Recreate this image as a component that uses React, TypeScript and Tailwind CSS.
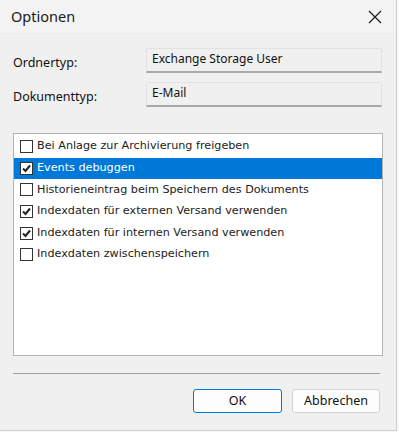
import React from "react";

const items = [
  { label: "Bei Anlage zur Archivierung freigeben", checked: false },
  { label: "Events debuggen", checked: true, selected: true },
  { label: "Historieneintrag beim Speichern des Dokuments", checked: false },
  { label: "Indexdaten für externen Versand verwenden", checked: true },
  { label: "Indexdaten für internen Versand verwenden", checked: true },
  { label: "Indexdaten zwischenspeichern", checked: false },
];

function Box({ checked }: { checked: boolean }) {
  return (
    <div className="w-[13px] h-[13px] border border-[#333333] bg-white flex items-center justify-center shrink-0">
      {checked && (
        <svg width="11" height="11" viewBox="0 0 11 11">
          <path d="M2 5.5 L4.5 8 L9 2.5" stroke="#222" strokeWidth="2" fill="none" />
        </svg>
      )}
    </div>
  );
}

export default function App() {
  const segoe = { fontFamily: '"Noto Sans", "Open Sans", sans-serif' };
  return (
    <div className="w-[399px] h-[432px] bg-[#f7f7f7] overflow-hidden">
      <div className="w-[397px] h-[431px] border-r border-b border-[#cfcfcf] bg-[#f0f0f0] flex flex-col" style={segoe}>
        <div className="h-[34px] bg-[#f3f3f3] flex items-center justify-between pl-[11px] pr-[14px] border-b border-[#ececec]">
          <span className="text-[14.5px] text-[#1a1a1a]">Optionen</span>
          <svg width="14" height="14" viewBox="0 0 14 14">
            <path d="M1 1 L13 13 M13 1 L1 13" stroke="#1a1a1a" strokeWidth="1.2" />
          </svg>
        </div>
        <div className="flex flex-col pl-[13px] pr-[14px]">
          <div className="flex items-start mt-[14px]">
            <div className="w-[133px] pt-[6px] text-[12.5px] text-[#111]">Ordnertyp:</div>
            <div className="w-[236px] h-[25px] border border-[#e2e2e2] border-b-2 border-b-[#a8a8a8] bg-[#f0f0f0] px-[5px] pt-[1px] text-[12px] text-[#111]">
              Exchange Storage User
            </div>
          </div>
          <div className="flex items-start mt-[9px]">
            <div className="w-[133px] pt-[6px] text-[12.5px] text-[#111]">Dokumenttyp:</div>
            <div className="w-[236px] h-[25px] border border-[#e2e2e2] border-b-2 border-b-[#a8a8a8] bg-[#f0f0f0] px-[5px] pt-[1px] text-[12px] text-[#111]">
              E-Mail
            </div>
          </div>
          <div
            className="mt-[26px] w-[370px] h-[223px] border border-[#b4b4b4] bg-white pt-[2px]"
            style={{ fontFamily: '"DejaVu Sans", sans-serif' }}
          >
            {items.map((it) => (
              <div
                key={it.label}
                className={`h-[21.6px] flex items-center gap-[4px] pl-[6px] text-[11.2px] ${
                  it.selected ? "bg-[#0078d7] text-white" : "text-[#222]"
                }`}
              >
                <Box checked={it.checked} />
                <span>{it.label}</span>
              </div>
            ))}
          </div>
          <div className="mt-[17px] w-[367px] h-px bg-[#a0a0a0]" />
          <div className="flex justify-end gap-[10px] mt-[15px] pr-[2px]">
            <button className="w-[89px] h-[24px] rounded-[3px] border border-[#0078d7] bg-[#fdfdfd] text-[12.5px] text-[#111]">
              OK
            </button>
            <button className="w-[88px] h-[24px] rounded-[3px] border border-[#d3d3d3] bg-[#fdfdfd] text-[12.5px] text-[#111]">
              Abbrechen
            </button>
          </div>
        </div>
      </div>
    </div>
  );
}
